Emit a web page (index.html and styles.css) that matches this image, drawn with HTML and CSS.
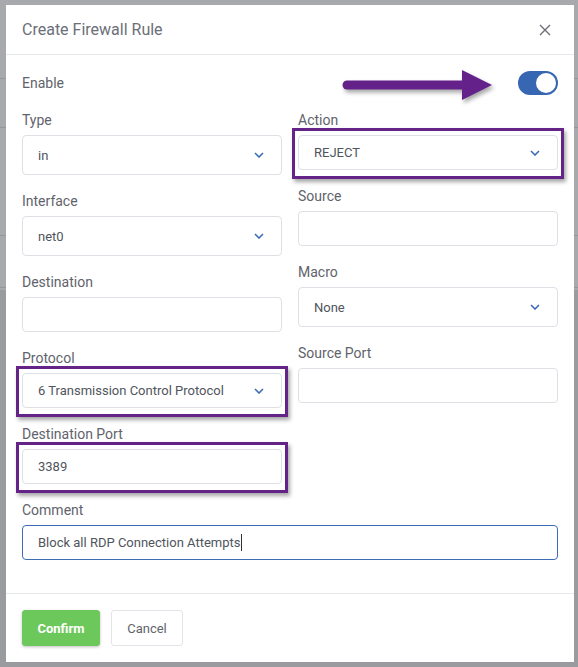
FILE: index.html
```html
<!doctype html>
<html>
  <head>
    <title>Create Firewall Rule</title>
    <link rel="stylesheet" href="styles.css">
  </head>
  <body>
    <div class="modal">
      <header class="modal-header">
        <h1 class="modal-title">Create Firewall Rule</h1>
        <button class="close" aria-label="Close">
          <svg width="12" height="12" viewBox="0 0 12 12"><path d="M1 1L11 11M11 1L1 11" stroke="#6b6e75" stroke-width="1.4" fill="none"/></svg>
        </button>
      </header>

      <div class="modal-body">
        <div class="enable-row">
          <span class="label flat">Enable</span>
          <span class="toggle"><span class="knob"></span></span>
        </div>

        <div class="columns">
          <!-- left column -->
          <div class="col">
            <div class="group">
              <label class="label">Type</label>
              <div class="select tall"><span>in</span><svg class="chev" width="10" height="6" viewBox="0 0 10 6"><path d="M1 1l4 4 4-4"/></svg></div>
            </div>
            <div class="group">
              <label class="label">Interface</label>
              <div class="select tall"><span>net0</span><svg class="chev" width="10" height="6" viewBox="0 0 10 6"><path d="M1 1l4 4 4-4"/></svg></div>
            </div>
            <div class="group">
              <label class="label">Destination</label>
              <input class="input" type="text">
            </div>
            <div class="group">
              <label class="label">Protocol</label>
              <div class="marked">
                <div class="select"><span>6 Transmission Control Protocol</span><svg class="chev" width="10" height="6" viewBox="0 0 10 6"><path d="M1 1l4 4 4-4"/></svg></div>
              </div>
            </div>
            <div class="group">
              <label class="label">Destination Port</label>
              <div class="marked">
                <input class="input" type="text" value="3389">
              </div>
            </div>
          </div>

          <!-- right column -->
          <div class="col">
            <div class="group">
              <label class="label">Action</label>
              <div class="marked">
                <div class="select"><span>REJECT</span><svg class="chev" width="10" height="6" viewBox="0 0 10 6"><path d="M1 1l4 4 4-4"/></svg></div>
              </div>
            </div>
            <div class="group">
              <label class="label">Source</label>
              <input class="input" type="text">
            </div>
            <div class="group">
              <label class="label">Macro</label>
              <div class="select tall"><span>None</span><svg class="chev" width="10" height="6" viewBox="0 0 10 6"><path d="M1 1l4 4 4-4"/></svg></div>
            </div>
            <div class="group">
              <label class="label">Source Port</label>
              <input class="input" type="text">
            </div>
          </div>
        </div>

        <div class="group">
          <label class="label">Comment</label>
          <div class="input focused">Block all RDP Connection Attempts<span class="caret"></span></div>
        </div>
      </div>

      <footer class="modal-footer">
        <button class="btn btn-confirm">Confirm</button>
        <button class="btn btn-cancel">Cancel</button>
      </footer>

      <!-- annotation arrow pointing at the toggle -->
      <svg class="arrow" width="160" height="45" viewBox="0 0 160 45">
        <path d="M6 20H124" stroke="#65218a" stroke-width="9" stroke-linecap="round"/>
        <polygon points="121,5 151,20 121,35" fill="#65218a"/>
      </svg>
    </div>
  </body>
</html>
```

FILE: styles.css
```css
body {
  margin: 0;
  min-height: 667px;
  font-family: Roboto, "Liberation Sans", sans-serif;
  background:
    linear-gradient(#95969a, #95969a) 0 78px / 100% 1px no-repeat,
    linear-gradient(#95969a, #95969a) 0 127px / 100% 1px no-repeat,
    linear-gradient(#95969a, #95969a) 0 235px / 100% 1px no-repeat,
    linear-gradient(#95969a, #95969a) 0 287px / 100% 1px no-repeat,
    linear-gradient(#a8a9ac, #a8a9ac) 0 0 / 100% 290px no-repeat,
    #9a9b9f;
}

.modal {
  position: relative;
  width: 568px;
  margin: 5px 0 0 6px;
  background: #fff;
}

.modal-header {
  height: 49px;
  padding: 0 23px 0 16px;
  display: flex;
  align-items: center;
  justify-content: space-between;
  border-bottom: 1px solid #e7e8ec;
}

.modal-title {
  margin: 0;
  font-size: 16px;
  font-weight: 400;
  color: #6b6f77;
}

.close {
  background: none;
  border: 0;
  padding: 0;
  display: flex;
}

.modal-body {
  padding: 16px 16px 17px;
}

.enable-row {
  height: 24px;
  display: flex;
  align-items: center;
  justify-content: space-between;
  margin-bottom: 15px;
}

.toggle {
  width: 40px;
  height: 24px;
  border-radius: 12px;
  background: #3767b3;
  display: flex;
  align-items: center;
  justify-content: flex-end;
  padding: 0 2px;
  box-sizing: border-box;
}

.knob {
  width: 20px;
  height: 20px;
  border-radius: 50%;
  background: #fff;
}

.columns {
  display: flex;
  gap: 16px;
}

.col {
  flex: 1;
}

.group {
  margin-bottom: 16px;
}

.label {
  display: block;
  font-size: 14px;
  line-height: 20px;
  margin-bottom: 5px;
  color: #5f636b;
}

.label.flat {
  margin: 0;
}

.select,
.input {
  box-sizing: border-box;
  width: 100%;
  height: 35px;
  border: 1px solid #dfe0e6;
  border-radius: 4px;
  padding: 0 15px;
  font-family: inherit;
  font-size: 13px;
  color: #50555d;
  background: #fff;
  display: flex;
  align-items: center;
}

.select {
  justify-content: space-between;
  padding-right: 17px;
}

.select.tall {
  height: 40px;
}

.chev path {
  fill: none;
  stroke: #3d6cb7;
  stroke-width: 1.6;
}

.input.focused {
  border-color: #3d6cb5;
}

.caret {
  display: inline-block;
  width: 1px;
  height: 17px;
  margin-left: 1px;
  background: #333;
}

.marked {
  position: relative;
}

.marked::after {
  content: "";
  position: absolute;
  inset: -7px -6px -9px -6px;
  border: 3px solid #632387;
  box-shadow: 2px 3px 4px rgba(0, 0, 0, 0.35);
  pointer-events: none;
}

.modal-footer {
  border-top: 1px solid #e7e8ec;
  padding: 16px;
  display: flex;
  gap: 11px;
}

.btn {
  height: 36px;
  border-radius: 3px;
  font-family: inherit;
  font-size: 13px;
  padding: 0;
}

.btn-confirm {
  width: 78px;
  background: #6cc85a;
  border: 1px solid #6cc85a;
  color: #fff;
  font-weight: 700;
  box-shadow: 0 1px 3px rgba(0, 0, 0, 0.25);
}

.btn-cancel {
  width: 72px;
  background: #fff;
  border: 1px solid #e3e4e9;
  color: #5f636b;
}

.arrow {
  position: absolute;
  left: 335px;
  top: 60px;
  filter: drop-shadow(2px 3px 2px rgba(0, 0, 0, 0.35));
}
```
